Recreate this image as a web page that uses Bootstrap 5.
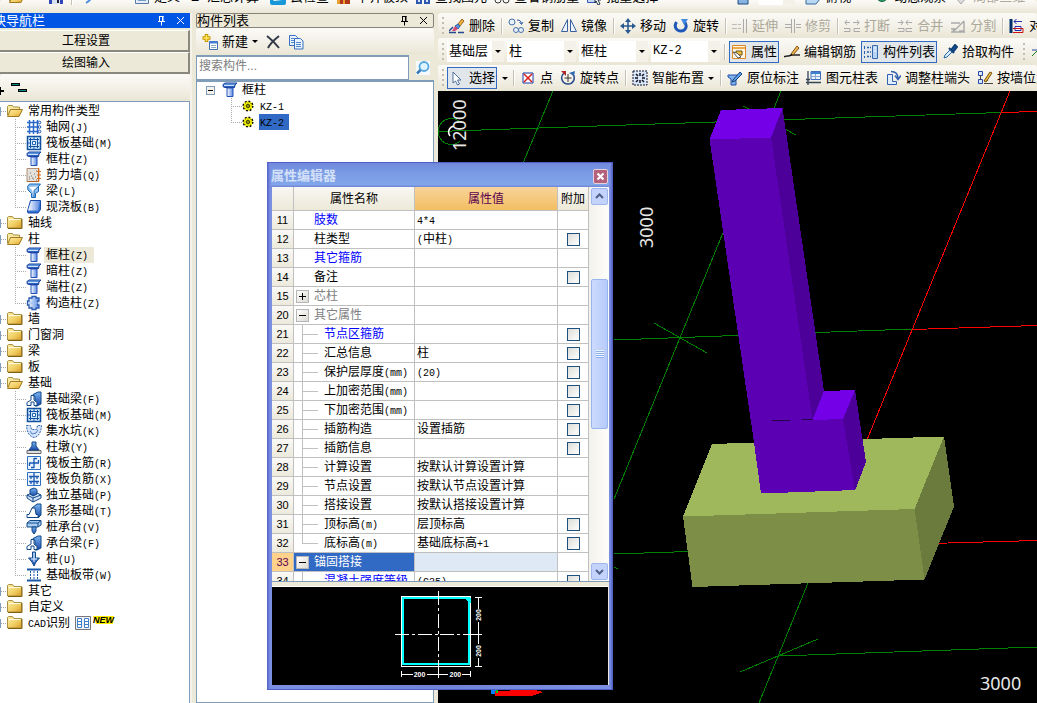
<!DOCTYPE html>
<html lang="zh-CN">
<head>
<meta charset="utf-8">
<meta name="viewport" content="width=device-width, initial-scale=1">
<title>属性编辑器</title>
<link rel="stylesheet" href="https://cdn.jsdelivr.net/npm/bootstrap@5.3.0/dist/css/bootstrap.min.css">
<style>
:root{--face:#ece9d8;--edge:#7f9db9;--hot:#316ac5}
body{font:12px/16px "Liberation Sans","Noto Sans CJK SC",sans-serif;color:#000;background:var(--face)}
button,input,select{font:inherit;color:inherit}
svg.ic{width:16px;height:16px;flex:none;display:block}
.mono{font:10px/1 "Liberation Mono",monospace}
.strip{background:linear-gradient(#fbfaf6,#f3f1e8 50%,#eae6d5);border-radius:3px}
.bar{font-size:13px;white-space:nowrap;overflow:hidden;gap:3px;padding-left:4px}
.bar>*{flex:none}
.peek{height:13px;padding-bottom:8px;gap:5px}
.peek .tool{height:16px;padding:0}
.row-a{height:25px}
.row-b{height:27px}
.row-c{height:26px}
.tool{display:flex;align-items:center;gap:4px;height:22px;padding:0 1px;border:1px solid transparent;background:none}
.tool.on{background:#e1e6ea;border-color:var(--hot)}
.tool:disabled{color:#aca899}
.grip{width:2px;height:18px;background:repeating-linear-gradient(#c1beb0 0 2px,transparent 2px 5px)}
.rule{width:3px;height:16px;background:linear-gradient(90deg,transparent 1px,#c5c2b4 1px 2px,#fff 2px)}
.drop{border:0;background:none;padding:0;width:9px;height:20px;display:flex;align-items:center;justify-content:center}
.drop::after,.caret::after{content:"";border:3px solid transparent;border-top-color:#000;border-bottom:0}
.pick{appearance:none;border:0;border-radius:0;height:21px;width:69px;padding:0 2px 2px;background:#fff url("data:image/svg+xml,%3Csvg xmlns='http://www.w3.org/2000/svg' width='12' height='21'%3E%3Cpath fill='%23f3f1e8' d='M0 0h12v21H0z'/%3E%3Cpath d='M3 9h6l-3 3z'/%3E%3C/svg%3E") right/12px 21px no-repeat}
.pick.first{width:57px}
.pick.code{font:12px/16px "Liberation Mono",monospace}
.pick.short{width:36px}
.nav-pane{width:192px;border-right:2px solid #f4f2ea}
.cap{height:15px;font-size:13px;line-height:15px;white-space:nowrap}
.cap.blue{background:#0055e5;color:#fff;margin-bottom:2px}
.cap.plain{border:1px solid #86847a;border-radius:2px;line-height:13px}
.cap button{border:0;background:none;padding:0;width:11px;height:11px;display:flex}
.cap svg{width:11px;height:11px}
.shift{margin-left:-20px}
.slab{height:22px;margin-left:-17px;border:1px solid #fff;border-right:2px solid #8a887c;border-bottom:2px solid #8a887c;background:var(--face);font-size:12px}
.tree{list-style:none;margin:0;padding:1px 0 0;background:#fff;border:solid var(--edge);border-width:1px 1px 0 0}
.tree ul{list-style:none;margin:0;padding:0}
.node{display:flex;align-items:center;height:16px;white-space:nowrap;color:#000;text-decoration:none}
.nav-pane .tree>li>.node{padding-left:7px;gap:5px;background:linear-gradient(90deg,var(--edge) 1px,transparent 1px) 0 50%/7px 9px no-repeat,repeating-linear-gradient(90deg,#aaa 0 1px,transparent 1px 2px) 1px 50%/6px 1px no-repeat}
.nav-pane ul li li,.parts ul li{background:repeating-linear-gradient(90deg,#aaa 0 1px,transparent 1px 2px) 15px 8px/11px 1px no-repeat,repeating-linear-gradient(#aaa 0 1px,transparent 1px 2px) 15px 0/1px 16px no-repeat}
.nav-pane ul li li:last-child,.parts ul li:last-child{background-size:11px 1px,1px 8px}
.nav-pane ul li li .node{padding-left:26px;gap:2px}
.node span{padding:0 2px;height:16px}
.node .mono{padding:0}
.node .dim{background:var(--face);padding-right:6px}
.badge-new{margin-left:-4px}
.list-pane{width:238px}
.find{height:25px;border:1px solid var(--edge);border-width:2px 1px 1px;background:#fff;padding:0 2px 4px;width:213px;font-size:12px}
.find::placeholder{color:#7d7d7d;opacity:1}
.parts{border:1px solid var(--edge);border-top-width:2px;padding-top:0}
.parts>li>.node{padding-left:9px;gap:2px}
.parts ul li{margin-left:19px}
.parts ul .node{padding-left:25px;gap:4px}
.parts ul .node .ic{width:14px}
.parts ul .node span{padding:0 5px 0 1px}
.parts ul .node .mono{padding:0}
.parts .sel{background:var(--hot)}
.minus{width:9px;height:9px;border:1px solid var(--edge);background:linear-gradient(#000,#000) 50%/5px 1px no-repeat #f3f1ea;margin-right:5px}
.scene{background:#000;min-height:0}
.scene svg{display:block;width:100%;height:100%}
.props{position:absolute;left:267px;top:162px;width:346px;background:linear-gradient(90deg,#4f5fc6,#7b8fe2 3px,#6f83da 50%,#7b8fe2 calc(100% - 3px),#4a58be);padding:0 4px 4px 5px;border:solid #4f5fc6;border-width:1px 0 1px 0}
.props header{height:24px;background:linear-gradient(#7088dc,#7a9ae4 40%,#82a6ea 90%,#6d84d6);padding:2px 1px 0 0;margin-left:-1px}
.props h1{font-size:13px;line-height:20px;font-weight:700;color:#d3e0f8;margin:0}
.shut{width:15px;height:15px;padding:0;border:1px solid #e8d0dc;border-radius:2px;background:#b4617c;display:flex}
.shut svg{width:13px;height:13px}
.sheet-box{height:395px;overflow:hidden;background:#fff;border-bottom:1px solid var(--edge)}
.sheet{table-layout:fixed;border-collapse:separate;border-spacing:0;width:317px;flex:none}
.sheet th,.sheet td{padding:0;border:solid #c0c0c0;border-width:0 1px 1px 0;height:19px;line-height:18px;white-space:nowrap;overflow:hidden;font-weight:400}
.sheet thead th{height:24px;text-align:center;background:linear-gradient(#f8f7f2,#ece9d8);line-height:22px}
.sheet thead th.amber{background:linear-gradient(#f8d49a,#f2be62);color:#5a0050}
.sheet tbody th{background:linear-gradient(#faf9f6,#ece9dc);text-align:center;font-size:11px}
.sheet td:nth-child(2){padding-left:20px}
.sheet td:nth-child(3){padding-left:2px}
.sheet .kid{padding-left:30px!important;background:linear-gradient(#c0c0c0,#c0c0c0) 8px 9px/16px 1px no-repeat,linear-gradient(#c0c0c0,#c0c0c0) 8px 0/1px 100% no-repeat}
.sheet .kid.end{background-size:16px 1px,1px 9px}
.sheet .grp{padding-left:2px!important;color:#808080}
.sheet .link{color:#00f}
.fold{width:13px;height:13px;border:1px solid #b5b5b5;background:linear-gradient(135deg,#fff,#dcdad2);padding:0;margin-right:5px;display:inline-flex;vertical-align:-2px;color:#000}
.fold svg{width:11px;height:11px}
.sheet .cur th{background:#ffd28c;color:#5a0050}
.sheet .cur .grp{background:var(--hot);color:#fff}
.sheet .cur td:nth-child(3){background:#dfe9f5}
.tick{appearance:none;display:block;width:13px;height:13px;margin:3px auto 2px;border:1px solid #1c5180;background:linear-gradient(135deg,#dcdcd7,#fff)}
.scroll{background:linear-gradient(90deg,#f3f1ec,#fefefb);padding:1px 2px 1px 2px}
.scroll button{width:17px;height:17px;border:1px solid #9db6ee;border-radius:2px;background:#c3d3fd;padding:0;display:flex}
.scroll button svg{width:15px;height:15px}
.thumb{width:17px;height:150px;margin-top:74px;border:1px solid #98b4ee;border-radius:2px;background:repeating-linear-gradient(#eef4fe 0 1px,#8cb0f8 1px 2px) 50% 50%/8px 8px no-repeat,linear-gradient(90deg,#ccdafd,#b6cafa)}
.section{background:#000;border-top:1px solid #fff;border-right:1px solid var(--face);margin-top:4px;height:99px}
.section svg{display:block;width:100%;height:98px}
.under{background:var(--face)}
.cmds{height:27px}
</style>
</head>
<body class="vh-100 overflow-hidden d-flex flex-column position-relative">
<svg class="position-absolute" width="0" height="0" aria-hidden="true">
<defs>
<linearGradient id="gb" x2="0" y2="1"><stop stop-color="#78b4f0"/><stop offset="1" stop-color="#1848a8"/></linearGradient>
<linearGradient id="gc"><stop stop-color="#fff"/><stop offset="1" stop-color="#5888e0"/></linearGradient>
<linearGradient id="gf" x2="1" y2="1"><stop stop-color="#fff0a8"/><stop offset=".6" stop-color="#f0cc60"/><stop offset="1" stop-color="#d89820"/></linearGradient>
</defs>
<symbol id="folder" viewBox="0 0 16 16"><path d="M.5 4V2.500l1-1h4l1.500 2h7.500v9.500H.5z" fill="url(#gf)" stroke="#a89040"/><path d="M1 13.500h14V4" fill="none" stroke="#806010"/><path d="M1.500 4.500h12" stroke="#fffbe0"/></symbol>
<symbol id="open" viewBox="0 0 16 16"><path d="M.5 12V3.500l1-1h4l1 1.500h6v2" fill="#f8e8a0" stroke="#a89040"/><path d="M3.500 6.500H15.500L12 13.500H.5z" fill="url(#gf)" stroke="#a07820"/></symbol>
<symbol id="axis" viewBox="0 0 16 16"><path d="M3.500 1v14M7.500 1v14M11.500 1v14M1 3.500h11M1 8h11M1 12.500h11" stroke="#2868c8" stroke-width="1.500"/><g fill="#fff" stroke="#1850b0"><circle cx="13.500" cy="3.500" r="1.300"/><circle cx="13.500" cy="8" r="1.300"/><circle cx="13.500" cy="12.500" r="1.300"/></g></symbol>
<symbol id="raft" viewBox="0 0 16 16"><path d="M1.500 1.500h13v13h-13z" fill="#d0e8ff" stroke="#10509c" stroke-width="1.500"/><path d="M4.500 3v10M11.500 3v10M3 4.500h10M3 11.500h10" stroke="#10509c"/><path d="M6.500 6.500h3v3h-3z" fill="#fff" stroke="#2060b0"/><path d="M7 3h2M7 13h2M3 7v2M13 7v2" stroke="#2060b0"/></symbol>
<symbol id="col" viewBox="0 0 16 16"><path d="M1 2.500 3 1h12l-2 2-.5 2.500h-10L1 4.500z" fill="url(#gb)" stroke="#1840a0"/><path d="M2 3.500h10" stroke="#d0e4ff"/><path d="M5 6h6v8.500H5z" fill="url(#gc)" stroke="#2050b8"/></symbol>
<symbol id="wall" viewBox="0 0 16 16"><path d="M1 1.500h12v13H1z" fill="#e4e0da" stroke="#b09078"/><path d="M3 12h1M5 9h1M7 12h1M9 10h1M4 6h1M8 7h1M10 4h1M10 13h1M6 11h1M3 10h1" stroke="#777"/><path d="M1 14.500h12" stroke="#b06020"/><path d="M12.500 1v14M11 4.500h4M11 8h4M11 11.500h4" stroke="#e06a10"/></symbol>
<symbol id="beam" viewBox="0 0 16 16"><path d="M1.500 3.500 3.500 1h11l-2 2.500v5l-3 2v4h-4v-4L2 7z" fill="#8cc0f0" stroke="#1868b8"/><path d="m3 4 9-.5L8 8v6L6 7z" fill="#fff"/><path d="M13 3 8 7.500V14" fill="none" stroke="#1868b8"/></symbol>
<symbol id="slab" viewBox="0 0 16 16"><path d="M4.500 1.500h10v9l-2.500 3.500h-10L1.500 12z" fill="#3070d0" stroke="#1848a8"/><path d="M5 2h9l-2 9.500H2z" fill="url(#gc)"/></symbol>
<symbol id="gear" viewBox="0 0 16 16"><path d="M3 3h3V1.500h4V3h3v3h-1.500v4H13v3h-3v1.500H6V13H3v-3H1.500V6H3z" fill="url(#gc)" stroke="#2858b0" stroke-width="1.300"/><path d="M8 2v12M2 8h12" stroke="#9cc0f4"/></symbol>
<symbol id="fbeam" viewBox="0 0 16 16"><path d="M7 3.500 12 1h3v12l-4 2H9V6z" fill="url(#gb)" stroke="#104888"/><path d="M1 14.500v-3L5 9V4.500h3V9l3 2.500v3H8V11H5v3.500z" fill="#fff" stroke="#104888"/></symbol>
<symbol id="pit" viewBox="0 0 16 16"><path d="M.5 2.500h4l1 4h5l1-4h4C15 9 13 13.500 8 14.500 3 13.500 1 9 .5 2.500z" fill="#d4e4fa" stroke="#3468b0" stroke-dasharray="2 1"/><path d="m4 8 2 3 4-1 2-3" fill="none" stroke="#5080c0"/></symbol>
<symbol id="pier" viewBox="0 0 16 16"><path d="M1 11.500h14v3H1z" fill="#ddd" stroke="#666"/><path d="m3 11 3-4V3h4v4l3 4z" fill="url(#gb)" stroke="#184888"/></symbol>
<symbol id="barA" viewBox="0 0 16 16"><path d="M1.500 1.500h13v13h-13z" fill="#eaf4ff" stroke="#3070c0"/><path d="M8 3v10M3 8h10M8 3.500h3M5 12.500h3M3.500 8v3M12.500 5v3" stroke="#1858b0" stroke-width="1.300"/></symbol>
<symbol id="barB" viewBox="0 0 16 16"><path d="M1.500 1.500h13v13h-13z" fill="#eaf4ff" stroke="#3070c0"/><path d="M8 2v12M3 5.500h10M3 10.500h10M5 5v3M11 5v3M5 10v3M11 10v3" stroke="#1858b0" stroke-width="1.300"/></symbol>
<symbol id="iso" viewBox="0 0 16 16"><path d="M1 8 9 5l6 3v3l-8 4-6-4z" fill="#cfe2f8" stroke="#104888"/><path d="m1 8 6 3 8-3M7 11v4" fill="none" stroke="#104888"/><path d="M4 2.500 8 1l3 1.500V7L7 9 4 7z" fill="url(#gb)" stroke="#104888"/></symbol>
<symbol id="strip" viewBox="0 0 16 16"><path d="m6 5 5-4h4v11l-3 3z" fill="url(#gb)" stroke="#104888"/><path d="M1 14.500v-3h2L6 5h3l1 6.500h2v3z" fill="#fff" stroke="#104888"/></symbol>
<symbol id="pcap" viewBox="0 0 16 16"><path d="m1 4 3-2.500h11V6l-3 2H1z" fill="#a8cdf4" stroke="#104888"/><path d="M1 4h11v4M12 4l3-2.500" fill="none" stroke="#104888"/><path d="M6 8h4v4l-2 3-2-3z" fill="url(#gb)" stroke="#104888"/></symbol>
<symbol id="pile" viewBox="0 0 16 16"><path d="M6.500 1h3v6h4L10 11l-2 4-2-4-3.500-4h4z" fill="url(#gb)" stroke="#104888"/><path d="M8 2v9M5 8h6" stroke="#e0f0ff"/></symbol>
<symbol id="band" viewBox="0 0 16 16"><path d="M1 2.500h14M1 13.500h14" stroke="#1858a8" stroke-width="2"/><path d="M4.500 4v9M8 4v9M11.500 4v9" stroke="#1858a8" stroke-dasharray="2 1"/></symbol>
<symbol id="flower" viewBox="0 0 16 16"><circle cx="8" cy="8" r="5.500" fill="#ff0" stroke="#000" stroke-width="1.600" stroke-dasharray="2.200 2.100"/><path d="M8 3v10M3 8h10M4.500 4.500l7 7M11.500 4.500l-7 7" stroke="#888800" stroke-width=".8"/><circle cx="8" cy="8" r="1.600" fill="#ff0" stroke="#000"/></symbol>
<symbol id="pin" viewBox="0 0 11 11"><path d="M3.500 1v5.500M2 6.500h7M3.500 1.500h4M7 1v5.500M5.500 6.500v4" fill="none" stroke="currentColor"/><path d="M6.500 1v5" stroke="currentColor"/></symbol>
<symbol id="x" viewBox="0 0 11 11"><path d="m2 2 7 7M9 2 2 9" stroke="currentColor"/></symbol>
</svg>

<div class="strip bar peek d-flex align-items-end w-100 flex-shrink-0" role="toolbar">
<button class="tool ms-1" aria-label="打开"><svg class="ic"><use href="#open"/></svg></button>
<button class="tool ms-3" aria-label="保存"><svg class="ic" viewBox="0 0 16 16"><path d="M1 1h14v14H1z" fill="#3048b8"/><path d="M4 9h8v6H4z" fill="#d8e0f4"/><path d="M9 10h2v4H9z" fill="#223"/></svg></button>
<span class="rule"></span>
<button class="tool me-4" aria-label="撤销"><svg class="ic" viewBox="0 0 16 16"><path d="M12 4c2 4 0 7-5 10" fill="none" stroke="#5090e0" stroke-width="2"/></svg></button>
<button class="tool ms-2"><svg class="ic" viewBox="0 0 16 16"><path d="M1.500 1.500h13v13h-13z" fill="#e4eefa" stroke="#5878a8"/><path d="M4 6h8v6H4z" fill="#7898c8"/></svg>定义</button>
<button class="tool"><span class="px-1">Σ</span>汇总计算</button>
<button class="tool ms-1"><svg class="ic" viewBox="0 0 16 16"><rect y="1" width="16" height="15" rx="2" fill="#1898d8"/><path d="M4 12c-3-3 1-6 3-4 2-3 6 0 5 3z" fill="#fff"/></svg>云检查</button>
<button class="tool"><svg class="ic" viewBox="0 0 16 16"><path d="M1 3h8v12H1z" fill="#e8a030"/><path d="M9 6h5v9H9zM4 8h3v7H4z" fill="#b03818"/></svg>平齐板顶</button>
<button class="tool"><svg class="ic" viewBox="0 0 16 16"><path d="M2 6h4v8H2zM10 6h4v8h-4z" fill="#d8e4fa" stroke="#3058b0" stroke-width="2"/></svg>查找图元</button>
<button class="tool"><svg class="ic" viewBox="0 0 16 16"><circle cx="4" cy="11" r="3" fill="none" stroke="#333"/><circle cx="12" cy="11" r="3" fill="none" stroke="#333"/></svg>查看钢筋量</button>
<button class="tool me-5"><svg class="ic" viewBox="0 0 16 16"><path d="M1.500 4.500h8v9h-8z" fill="#c8d8f4" stroke="#3058b0"/><path d="m9 5 6 6h-3l2 4-2 1-2-4-1 2z" fill="#fff" stroke="#234"/></svg>批量选择</button>
<button class="tool ms-4"><svg class="ic" viewBox="0 0 16 16"><path d="M1 5h10v10H1z" fill="#88b4e4" stroke="#204880"/></svg></button>
<select class="pick short" aria-label="视图"><option></option></select>
<button class="tool ms-1"><svg class="ic" viewBox="0 0 16 16"><path d="M1 6 6 2h9v8l-4 5H1z" fill="#b8d8f4" stroke="#386898"/></svg>俯视</button>
<button class="tool ms-3"><svg class="ic" viewBox="0 0 16 16"><path d="M2 8c3-4 9-4 12 0-3 6-9 6-12 0z" fill="#28a068" stroke="#186040"/></svg>动态观察</button>
<button class="tool" disabled><svg class="ic" viewBox="0 0 16 16"><path d="m2 8 6-5 6 5-6 7z" fill="#ddd" stroke="#aaa"/></svg>局部三维</button>
</div>

<div class="d-flex flex-grow-1 overflow-hidden">
<nav class="nav-pane d-flex flex-column flex-shrink-0 overflow-hidden" aria-label="模块导航栏">
<div class="cap blue d-flex align-items-center pe-1 overflow-hidden flex-shrink-0"><span class="shift flex-grow-1">模块导航栏</span><button class="me-2" aria-label="固定"><svg><use href="#pin"/></svg></button><button aria-label="关闭"><svg><use href="#x"/></svg></button></div>
<button class="slab p-0 flex-shrink-0">工程设置</button>
<button class="slab p-0 flex-shrink-0">绘图输入</button>
<div class="strip cmds d-flex align-items-center flex-shrink-0"><svg width="30" height="16" viewBox="0 0 30 16" shape-rendering="crispEdges"><path d="M0 7h1v3h3v2H1v3H0z"/><path d="M11 3h9v3h-9zM18 9h9v3h-9z" fill="#000"/><path d="M12 4h7v1h-7zM19 10h7v1h-7z" fill="#088"/></svg></div>
<ul class="tree flex-grow-1">
<li><a href="#" class="node"><svg class="ic"><use href="#open"/></svg>常用构件类型</a>
<ul>
<li><a href="#" class="node"><svg class="ic"><use href="#axis"/></svg><span>轴网<span class="mono">(J)</span></span></a></li>
<li><a href="#" class="node"><svg class="ic"><use href="#raft"/></svg><span>筏板基础<span class="mono">(M)</span></span></a></li>
<li><a href="#" class="node"><svg class="ic"><use href="#col"/></svg><span>框柱<span class="mono">(Z)</span></span></a></li>
<li><a href="#" class="node"><svg class="ic"><use href="#wall"/></svg><span>剪力墙<span class="mono">(Q)</span></span></a></li>
<li><a href="#" class="node"><svg class="ic"><use href="#beam"/></svg><span>梁<span class="mono">(L)</span></span></a></li>
<li><a href="#" class="node"><svg class="ic"><use href="#slab"/></svg><span>现浇板<span class="mono">(B)</span></span></a></li>
</ul></li>
<li><a href="#" class="node"><svg class="ic"><use href="#folder"/></svg>轴线</a></li>
<li><a href="#" class="node"><svg class="ic"><use href="#open"/></svg>柱</a>
<ul>
<li><a href="#" class="node"><svg class="ic"><use href="#col"/></svg><span class="dim">框柱<span class="mono">(Z)</span></span></a></li>
<li><a href="#" class="node"><svg class="ic"><use href="#col"/></svg><span>暗柱<span class="mono">(Z)</span></span></a></li>
<li><a href="#" class="node"><svg class="ic"><use href="#col"/></svg><span>端柱<span class="mono">(Z)</span></span></a></li>
<li><a href="#" class="node"><svg class="ic"><use href="#gear"/></svg><span>构造柱<span class="mono">(Z)</span></span></a></li>
</ul></li>
<li><a href="#" class="node"><svg class="ic"><use href="#folder"/></svg>墙</a></li>
<li><a href="#" class="node"><svg class="ic"><use href="#folder"/></svg>门窗洞</a></li>
<li><a href="#" class="node"><svg class="ic"><use href="#folder"/></svg>梁</a></li>
<li><a href="#" class="node"><svg class="ic"><use href="#folder"/></svg>板</a></li>
<li><a href="#" class="node"><svg class="ic"><use href="#open"/></svg>基础</a>
<ul>
<li><a href="#" class="node"><svg class="ic"><use href="#fbeam"/></svg><span>基础梁<span class="mono">(F)</span></span></a></li>
<li><a href="#" class="node"><svg class="ic"><use href="#raft"/></svg><span>筏板基础<span class="mono">(M)</span></span></a></li>
<li><a href="#" class="node"><svg class="ic"><use href="#pit"/></svg><span>集水坑<span class="mono">(K)</span></span></a></li>
<li><a href="#" class="node"><svg class="ic"><use href="#pier"/></svg><span>柱墩<span class="mono">(Y)</span></span></a></li>
<li><a href="#" class="node"><svg class="ic"><use href="#barA"/></svg><span>筏板主筋<span class="mono">(R)</span></span></a></li>
<li><a href="#" class="node"><svg class="ic"><use href="#barB"/></svg><span>筏板负筋<span class="mono">(X)</span></span></a></li>
<li><a href="#" class="node"><svg class="ic"><use href="#iso"/></svg><span>独立基础<span class="mono">(P)</span></span></a></li>
<li><a href="#" class="node"><svg class="ic"><use href="#strip"/></svg><span>条形基础<span class="mono">(T)</span></span></a></li>
<li><a href="#" class="node"><svg class="ic"><use href="#pcap"/></svg><span>桩承台<span class="mono">(V)</span></span></a></li>
<li><a href="#" class="node"><svg class="ic"><use href="#fbeam"/></svg><span>承台梁<span class="mono">(F)</span></span></a></li>
<li><a href="#" class="node"><svg class="ic"><use href="#pile"/></svg><span>桩<span class="mono">(U)</span></span></a></li>
<li><a href="#" class="node"><svg class="ic"><use href="#band"/></svg><span>基础板带<span class="mono">(W)</span></span></a></li>
</ul></li>
<li><a href="#" class="node"><svg class="ic"><use href="#folder"/></svg>其它</a></li>
<li><a href="#" class="node"><svg class="ic"><use href="#folder"/></svg>自定义</a></li>
<li><a href="#" class="node"><svg class="ic"><use href="#folder"/></svg><div><span class="mono">CAD</span>识别</div><svg class="ic" viewBox="0 0 16 16"><path d="M.5 1.500h15v13H.5z" fill="#f0f4fa" stroke="#777"/><path d="M2.500 3.500h4v9h-4zM9.500 3.500h4v9h-4zM3 6.500h3M3 9.500h3M10 6.500h3M10 9.500h3" fill="#fff" stroke="#4080c8"/></svg><svg class="badge-new" width="24" height="16" viewBox="0 0 24 16"><path d="M1 1h21l-1 8H4z" fill="#fe0"/><text x="1" y="8" font-family="Liberation Sans" font-size="9" font-weight="700" font-style="italic">NEW</text></svg></a></li>
</ul>
</nav>

<section class="list-pane d-flex flex-column flex-shrink-0 ms-1" aria-label="构件列表">
<div class="cap plain d-flex align-items-center pe-1 flex-shrink-0"><span class="flex-grow-1">构件列表</span><button class="me-2" aria-label="固定"><svg><use href="#pin"/></svg></button><button aria-label="关闭"><svg><use href="#x"/></svg></button></div>
<div class="strip bar cmds d-flex align-items-center flex-shrink-0">
<button class="tool caret"><svg class="ic" viewBox="0 0 16 16"><path d="M4.500 0v8M.5 4h8" stroke="#c89800" stroke-width="3.500"/><path d="M4.500 1v6M1.500 4h6" stroke="#ffe860" stroke-width="1.500"/><path d="M7.500 7.500h8v8h-8z" fill="#fff" stroke="#4070b8"/><path d="M8 8.500h7" stroke="#4080d8" stroke-width="2"/><path d="M9 11.500h5M9 13.500h5" stroke="#8ab"/></svg>新建</button>
<button class="tool" aria-label="删除"><svg class="ic" viewBox="0 0 16 16"><path d="M2 2c4 3 8 7 12 12M14 2C9 6 5 10 3 14" fill="none" stroke="#333a48" stroke-width="2"/></svg></button>
<button class="tool" aria-label="复制"><svg class="ic" viewBox="0 0 16 16"><g fill="#e8f2ff" stroke="#3870c0"><path d="M1.500 1.500h6l2 2v8h-8z"/><path d="M6.500 4.500h6l2.500 2.500v8H6.500z"/></g><path d="M3 4.500h3M3 6.500h3M3 8.500h3M8 8.500h5M8 10.500h5M8 12.500h5" stroke="#5088d0"/></svg></button>
</div>
<div class="d-flex align-items-center flex-shrink-0"><input class="find" type="text" placeholder="搜索构件..." aria-label="搜索构件"><button class="tool ms-1" aria-label="搜索"><svg class="ic" viewBox="0 0 16 16"><path d="M1 1h14v14H1z" fill="#f4faff"/><circle cx="9" cy="6.500" r="4.500" fill="#e0f4ff" stroke="#58a8e0" stroke-width="1.800"/><path d="M5.500 10 2 13.500" stroke="#3878b8" stroke-width="2.500"/></svg></button></div>
<ul class="tree parts flex-grow-1">
<li><a href="#" class="node"><i class="minus"></i><svg class="ic"><use href="#col"/></svg><span>框柱</span></a>
<ul>
<li><a href="#" class="node"><svg class="ic"><use href="#flower"/></svg><span><span class="mono">KZ-1</span></span></a></li>
<li><a href="#" class="node"><svg class="ic"><use href="#flower"/></svg><span class="sel"><span class="mono">KZ-2</span></span></a></li>
</ul></li>
</ul>
</section>

<main class="d-flex flex-column flex-grow-1 ms-1 overflow-hidden">
<div class="strip bar row-a d-flex align-items-center flex-shrink-0" role="toolbar">
<span class="grip"></span>
<button class="tool"><svg class="ic" viewBox="0 0 16 16"><path d="m9 6 4-5 2 2-4 5z" fill="#f0b040" stroke="#a06820"/><path d="m6 8 3-2 2 2-2 3z" fill="#5898e0" stroke="#2860a8"/><path d="m3 13 3-5 3 3-3 2z" fill="#d84878"/><path d="M0 14.500h7M9 14.500h6M0 13l4-4" stroke="#284890" stroke-width="1.500"/></svg>删除</button>
<span class="rule"></span>
<button class="tool"><svg class="ic" viewBox="0 0 16 16"><g fill="#e8f0fa" stroke="#4870a8"><circle cx="4" cy="4" r="3"/><circle cx="8" cy="12" r="2.500"/><circle cx="13" cy="12" r="2.500"/></g><path d="M9 2c3 0 4 1 4.500 4m-2-2 2 2.500L15 4" fill="none" stroke="#3060a8"/></svg>复制</button>
<button class="tool"><svg class="ic" viewBox="0 0 16 16"><path d="M6.500 1.500v12h-6zM9.500 1.500v12h6z" fill="#eef4ff" stroke="#3860a0"/></svg>镜像</button>
<span class="rule"></span>
<button class="tool"><svg class="ic" viewBox="0 0 16 16"><path d="M8 2v12M2 8h12" stroke="#285890" stroke-width="1.600"/><path d="m8 0 3 4H5zM8 16l3-4H5zM0 8l4-3v6zM16 8l-4-3v6z" fill="#285890"/></svg>移动</button>
<button class="tool"><svg class="ic" viewBox="0 0 16 16"><path d="M3.500 4c-3 5 0 9 4.500 9s7-5 3.500-9" fill="none" stroke="#2058b8" stroke-width="3"/><path d="M8 1h7l-4 6z" fill="#4088e0"/></svg>旋转</button>
<span class="rule"></span>
<button class="tool" disabled><svg class="ic" viewBox="0 0 16 16"><path d="M0 6.500h9M0 10.500h9" stroke="#bbb" stroke-dasharray="5 1"/><path d="M11.500 1v14M14.500 1v14" stroke="#aaa"/></svg>延伸</button>
<button class="tool" disabled><svg class="ic" viewBox="0 0 16 16"><path d="M0 6.500h6M0 9.500h6M11 6.500h5M11 9.500h5M6.500 1v14M9.500 1v14" stroke="#aaa"/></svg>修剪</button>
<span class="rule"></span>
<button class="tool" disabled><svg class="ic" viewBox="0 0 16 16"><path d="M1 4.500h5M9 4.500h6M3 2 1 4.500 3 7M13 2l2 2.500L13 7M0 10.500h6v3H0M16 10.500h-6v3h6" fill="none" stroke="#aaa"/></svg>打断</button>
<button class="tool" disabled><svg class="ic" viewBox="0 0 16 16"><path d="M1 4.500h5M9 4.500h6M4 2l2 2.500L4 7M11 2 9 4.500 11 7M1 10.500h6v3H1M15 10.500H9v3h6" fill="none" stroke="#aaa"/></svg>合并</button>
<button class="tool" disabled><svg class="ic" viewBox="0 0 16 16"><path d="M1 5h9M1 11h5M3 14 14 3M14 3v10H9M3 14l1-4M1 14h14" fill="none" stroke="#aaa" stroke-width="1.400"/></svg>分割</button>
<span class="rule"></span>
<button class="tool"><svg class="ic" viewBox="0 0 16 16"><path d="M2 1v14" stroke="#003068" stroke-width="3"/><path d="M5 3.500h8M7.500 1 5 3.500 7.500 6" fill="none" stroke="#2030b0"/><path d="M6 8.500h6v4H6z" fill="#fff" stroke="#2030b0"/><path d="M4 10.500h10v4H4" fill="none" stroke="#d01010"/></svg>对齐</button>
</div>
<div class="strip bar row-b d-flex align-items-center flex-shrink-0" role="toolbar">
<span class="grip"></span>
<select class="pick first" aria-label="楼层"><option>基础层</option></select>
<select class="pick" aria-label="构件大类"><option>柱</option></select>
<select class="pick" aria-label="构件类型"><option>框柱</option></select>
<select class="pick code" aria-label="构件名称"><option>KZ-2</option></select>
<span class="rule"></span>
<button class="tool on"><svg class="ic" viewBox="0 0 16 16"><path d="M1.500 1.500h13v13h-13z" fill="#fdf6e4" stroke="#e08828"/><path d="M2 4h12" stroke="#f0a850" stroke-width="2"/><path d="M5 7h6v4H5z" fill="#f0c040" stroke="#705010"/><path d="m2 8 4 1 4 4-3 1z" fill="#fff" stroke="#555"/></svg>属性</button>
<button class="tool"><svg class="ic" viewBox="0 0 16 16"><path d="M0 13c3-2 5 0 7-2h9" fill="none" stroke="#222" stroke-width="1.500"/><path d="m7 10 6-8 2 2-6 7z" fill="#e8b848" stroke="#885020"/><path d="m7 10-1 2 3-1z"/></svg>编辑钢筋</button>
<button class="tool on"><svg class="ic" viewBox="0 0 16 16"><path d="M1.500 2v12" stroke="#2860b0" stroke-dasharray="3 2"/><path d="M4 3.500h4M4 8h4M4 12.500h4" stroke="#2860b0" stroke-width="1.500" stroke-dasharray="2 1"/><path d="M9.500 1.500h5v13h-5z" fill="#b8d4f4" stroke="#3868b0"/><path d="M11 4h2M11 7h2" stroke="#fff"/></svg>构件列表</button>
<button class="tool"><svg class="ic" viewBox="0 0 16 16"><path d="M2 14 3 11 9 5l2 2-6 6z" fill="#d8ecff" stroke="#2868a8"/><path d="m7 4 5 5M9 6l4-5 2 2-4 5z" fill="#1858a0" stroke="#104078" stroke-width="2"/></svg>拾取构件</button>
<span class="grip ms-1"></span>
<button class="tool" aria-label="坐标"><svg class="ic" viewBox="0 0 16 16"><path d="M2 6h12M8 1v14" stroke="#2848a0"/><path d="M2 12 8 6l6 7" fill="none" stroke="#188018"/><path d="m8 6 3 2" stroke="red" stroke-width="2"/></svg></button>
</div>
<div class="strip bar row-c d-flex align-items-center flex-shrink-0" role="toolbar">
<span class="grip"></span>
<button class="tool on"><svg class="ic" viewBox="0 0 16 16"><path d="m4 2 8 8H8.500l2 4-2 1-2-4L4 13z" fill="#fff" stroke="#5070a0"/></svg>选择</button>
<button class="drop" aria-label="选择方式"></button>
<span class="rule"></span>
<button class="tool"><svg class="ic" viewBox="0 0 16 16"><path d="M3 3h10v10H3z" fill="#fff" stroke="#1838a0"/><path d="m4 4 8 8M12 4l-8 8" stroke="#d82020" stroke-width="1.500"/></svg>点</button>
<button class="tool"><svg class="ic" viewBox="0 0 16 16"><path d="M4 3c-5 5-1 11 4 11s8-5 5-10" fill="none" stroke="#284888" stroke-width="1.500"/><path d="M8 4v8M4.500 8h7" stroke="#333"/><path d="M1 1h5v5z" fill="#b02828"/><path d="m9 3 6-2-1 5z" fill="#3068b0"/></svg>旋转点</button>
<span class="rule"></span>
<button class="tool caret"><svg class="ic" viewBox="0 0 16 16"><path d="M1 1h14v14H1z" fill="#d8e8f8" stroke="#113" stroke-dasharray="2 1"/><path d="M8 3v3M8 10v3M3 8h3M10 8h3M4 4l2 2M12 4l-2 2M4 12l2-2M12 12l-2-2" stroke="#112" stroke-width="1.500"/></svg>智能布置</button>
<span class="rule"></span>
<button class="tool"><svg class="ic" viewBox="0 0 16 16"><path d="M1 5h10v2L9 9v6H4V9L1 7z" fill="#80b0ec" stroke="#2050a8"/><path d="m6 10 7-8 2 2-7 7-3 1z" fill="#58a0e8" stroke="#184078"/></svg>原位标注</button>
<button class="tool"><svg class="ic" viewBox="0 0 16 16"><path d="M2 1v14M0 12.500h15M0 9.500h4" stroke="#345" stroke-width="1.300"/><path d="M5 1.500h9.500v8H5z" fill="#e8f2ff" stroke="#4070b8"/><path d="M5 3h9" stroke="#4080d0" stroke-width="2"/><path d="M5 6.500h9M9.500 4v5" stroke="#8ac"/></svg>图元柱表</button>
<button class="tool"><svg class="ic" viewBox="0 0 16 16"><path d="M2.500 4.500h5v7h4v3h-9z" fill="#e0ecff" stroke="#3060b0"/><path d="M6 1.500c5 0 7 2 7 7m-3-3 3 4 3-4" fill="none" stroke="#3060b0" stroke-width="1.500"/></svg>调整柱端头</button>
<button class="tool"><svg class="ic" viewBox="0 0 16 16"><path d="M1.500 1.500h4v4h-4zM1.500 9.500h4v4h-4z" fill="#d8e8ff" stroke="#2848a8"/><path d="M3.500 5v5M7 13.500h9M7 10.500h4" stroke="#444"/><path d="m7 11 6-9 2 1-6 9z" fill="#e8c040" stroke="#7c5010"/></svg>按墙位置绘制柱</button>
</div>
<div class="scene flex-grow-1 overflow-hidden">
<svg viewBox="438 91 599 612" preserveAspectRatio="xMinYMin slice" role="img" aria-label="三维模型">
<g shape-rendering="crispEdges">
<g stroke="#008000" fill="none">
<path d="M438 131.500 670 123.500 1001 112.500M553 91 491 240M781 91 614 499M743 106l53 29M614 340l298-11M654 323l53 30M614 554l150-5M808 583l-49 120M740 672l78-33M779 656l258-9M614 567l4 2"/>
<path d="M460 122a13 13 0 1 0 0 19"/>
</g>
<path stroke="red" d="M1010 91 860 457M1001 112.500l36-1M912 329.500l125-4M930 543.500l107-3" fill="none"/>
<path d="m712 444 232-7.500-29.500 72.500L683 516.500z" fill="#a0b85c"/>
<path d="m683 516.500 231.500-7.500 10 70.500-232 7.500z" fill="#7d8f47"/>
<path d="m944 436.500 10 70-29.500 73-10-70.500z" fill="#6b7a3d"/>
<path d="M751 421l93-2 11 71-94 3.500z" fill="#5c00b3"/>
<path d="m824 391 31-1-12 29-31 1z" fill="#7300e6"/>
<path d="m855 390 11 72-11 28.500-12-71.500z" fill="#4d0099"/>
<path d="m709.500 139 62-2L813 419.500 751 422z" fill="#5c00b3"/>
<path d="m782.500 108 41.500 283-11.500 29L771 137z" fill="#4d0099"/>
<path d="m721 110 61.500-2L771 137.500l-61.500 2z" fill="#7300e6"/>
<path d="M772 420.500h18M802 419.500h11" stroke="#240048"/>
<path d="M491 689h6v5h-6z" fill="#0080ff"/><path d="M495 691h15v-2h22l11 3-12 4h-36z" fill="red"/><path d="M496 690h2v3h-2z" fill="#0c0"/>
</g>
<path d="M450 136c-3-4-1-9 4-10" fill="none" stroke="#fff" stroke-width="1.500"/>
<g fill="#e8e8e8" font-family="Noto Sans, sans-serif" font-size="18">
<text transform="translate(466 151) rotate(-90)">12000</text>
<text transform="translate(653 248) rotate(-90)">3000</text>
<text x="980" y="690">3000</text>
</g>
</svg>
</div>
</main>
</div>

<section class="props" role="dialog" aria-labelledby="dlgTitle">
<header class="d-flex align-items-center justify-content-between"><h1 id="dlgTitle">属性编辑器</h1><button class="shut" aria-label="关闭"><svg viewBox="0 0 13 13"><path d="m3.500 3.500 6 6M9.500 3.500l-6 6" stroke="#fff" stroke-width="2.200"/></svg></button></header>
<div class="under">
<div class="sheet-box d-flex">
<table class="sheet">
<colgroup><col style="width:22px"><col style="width:121px"><col style="width:143px"><col style="width:31px"></colgroup>
<thead><tr><th></th><th>属性名称</th><th class="amber">属性值</th><th>附加</th></tr></thead>
<tbody>
<tr><th>11</th><td class="link">肢数</td><td><span class="mono">4*4</span></td><td></td></tr>
<tr><th>12</th><td>柱类型</td><td><span class="mono">(</span>中柱<span class="mono">)</span></td><td><input type="checkbox" class="tick" aria-label="柱类型"></td></tr>
<tr><th>13</th><td class="link">其它箍筋</td><td></td><td></td></tr>
<tr><th>14</th><td>备注</td><td></td><td><input type="checkbox" class="tick" aria-label="备注"></td></tr>
<tr><th>15</th><td class="grp"><button class="fold" aria-label="展开"><svg viewBox="0 0 11 11"><path d="M2 5.500h7M5.500 2v7" stroke="#000"/></svg></button>芯柱</td><td></td><td></td></tr>
<tr><th>20</th><td class="grp"><button class="fold" aria-label="折叠"><svg viewBox="0 0 11 11"><path d="M2 5.500h7" stroke="#000"/></svg></button>其它属性</td><td></td><td></td></tr>
<tr><th>21</th><td class="kid link">节点区箍筋</td><td></td><td><input type="checkbox" class="tick" aria-label="节点区箍筋"></td></tr>
<tr><th>22</th><td class="kid">汇总信息</td><td>柱</td><td><input type="checkbox" class="tick" aria-label="汇总信息"></td></tr>
<tr><th>23</th><td class="kid">保护层厚度<span class="mono">(mm)</span></td><td><span class="mono">(20)</span></td><td><input type="checkbox" class="tick" aria-label="保护层厚度"></td></tr>
<tr><th>24</th><td class="kid">上加密范围<span class="mono">(mm)</span></td><td></td><td><input type="checkbox" class="tick" aria-label="上加密范围"></td></tr>
<tr><th>25</th><td class="kid">下加密范围<span class="mono">(mm)</span></td><td></td><td><input type="checkbox" class="tick" aria-label="下加密范围"></td></tr>
<tr><th>26</th><td class="kid">插筋构造</td><td>设置插筋</td><td><input type="checkbox" class="tick" aria-label="插筋构造"></td></tr>
<tr><th>27</th><td class="kid">插筋信息</td><td></td><td><input type="checkbox" class="tick" aria-label="插筋信息"></td></tr>
<tr><th>28</th><td class="kid">计算设置</td><td>按默认计算设置计算</td><td></td></tr>
<tr><th>29</th><td class="kid">节点设置</td><td>按默认节点设置计算</td><td></td></tr>
<tr><th>30</th><td class="kid">搭接设置</td><td>按默认搭接设置计算</td><td></td></tr>
<tr><th>31</th><td class="kid">顶标高<span class="mono">(m)</span></td><td>层顶标高</td><td><input type="checkbox" class="tick" aria-label="顶标高"></td></tr>
<tr><th>32</th><td class="kid end">底标高<span class="mono">(m)</span></td><td>基础底标高<span class="mono">+1</span></td><td><input type="checkbox" class="tick" aria-label="底标高"></td></tr>
<tr class="cur"><th>33</th><td class="grp"><button class="fold" aria-label="折叠"><svg viewBox="0 0 11 11"><path d="M2 5.500h7" stroke="#000"/></svg></button>锚固搭接</td><td></td><td></td></tr>
<tr><th>34</th><td class="kid link">混凝土强度等级</td><td><span class="mono">(C35)</span></td><td><input type="checkbox" class="tick" aria-label="混凝土强度等级"></td></tr>
</tbody>
</table>
<div class="scroll flex-grow-1 d-flex flex-column">
<button aria-label="向上"><svg viewBox="0 0 15 15"><path d="m4 9 3.500-3.500L11 9" fill="none" stroke="#4d6185" stroke-width="2"/></svg></button>
<div class="thumb"></div>
<button class="mt-auto" aria-label="向下"><svg viewBox="0 0 15 15"><path d="m4 6 3.500 3.500L11 6" fill="none" stroke="#4d6185" stroke-width="2"/></svg></button>
</div>
</div>
<div class="section">
<svg viewBox="272 587 337 98" role="img" aria-label="柱截面">
<g fill="none" stroke="#fff" shape-rendering="crispEdges">
<path d="M401.500 596.500h70v70h-70z"/>
<path d="M403 598h67v66H403z" stroke="#0ff" stroke-width="2"/>
<path d="M466 598h5v5z" fill="#0ff" stroke="#0ff"/>
<path d="M438.500 591v87M395 634.500h87" stroke-dasharray="14 3 3 3"/>
<path d="M476 597.500h7M476 666.500h7M476 634.500h7M479.500 597v12M479.500 622v22M479.500 658v9M401.500 671v6M438.500 671v6M471.500 671v6M402 674.500h11M427 674.500h22M463 674.500h9"/>
</g>
<g fill="#fff" font-family="Liberation Sans, sans-serif" font-size="7" font-weight="700" text-anchor="middle">
<text x="420" y="677">200</text><text x="456" y="677">200</text>
<text transform="translate(482 615) rotate(-90)">200</text><text transform="translate(482 651) rotate(-90)">200</text>
</g>
</svg>
</div>
</div>
</section>
<script src="https://cdn.jsdelivr.net/npm/bootstrap@5.3.0/dist/js/bootstrap.bundle.min.js"></script>
</body>
</html>
